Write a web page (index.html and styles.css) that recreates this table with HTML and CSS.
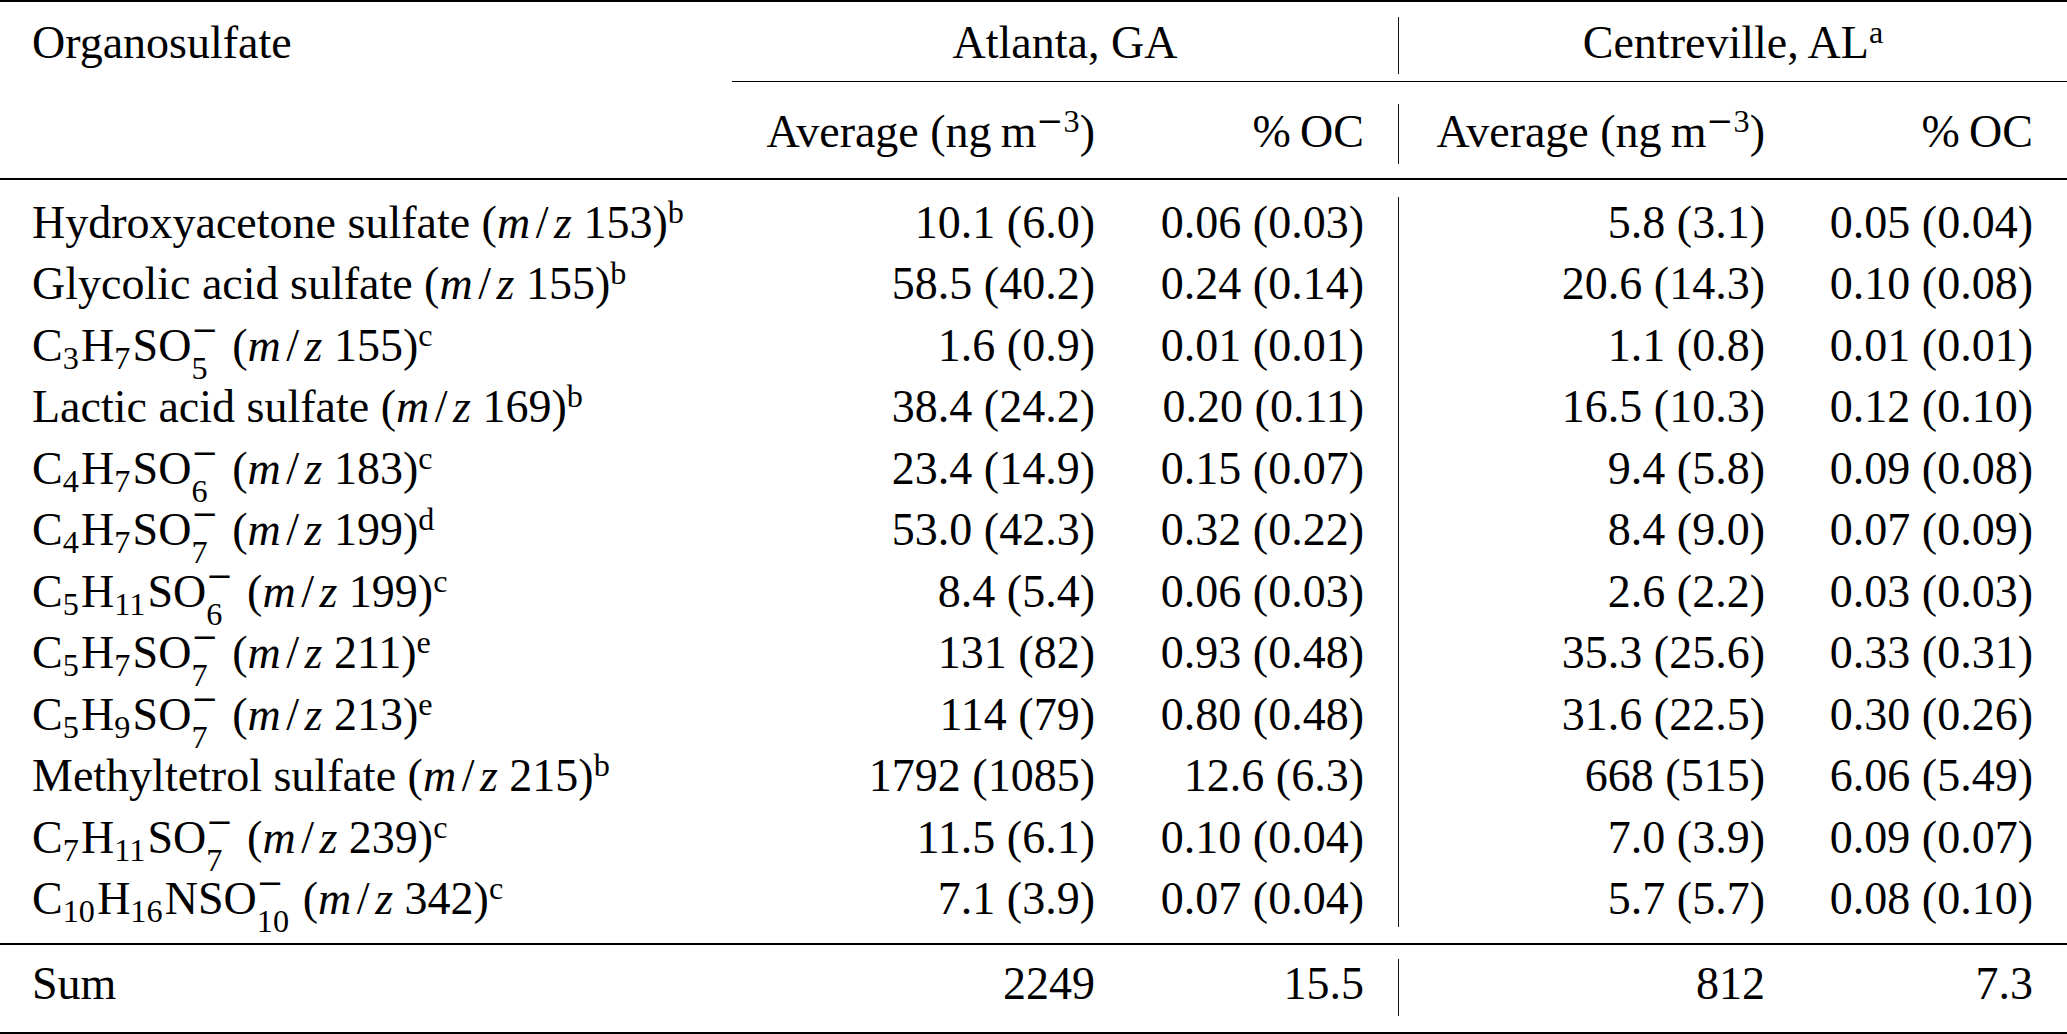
FILE: index.html
```html
<!DOCTYPE html>
<html lang="en">
<head>
<meta charset="utf-8">
<title>Organosulfate concentrations</title>
<link rel="stylesheet" href="styles.css">
</head>
<body>
<div class="tab">
  <div class="sec head1">
    <div class="c1">Organosulfate</div>
    <div class="grp">Atlanta, GA</div>
    <div class="vl"></div>
    <div class="grp">Centreville, AL<span class="sp">a</span></div>
  </div>
  <div class="cmid"></div>
  <div class="sec head2">
    <div class="c1"></div>
    <div class="num">Average (ng&thinsp;m<span class="sp"><span class="mn">−</span>3</span>)</div>
    <div class="num end">%&thinsp;OC</div>
    <div class="vl"></div>
    <div class="num">Average (ng&thinsp;m<span class="sp"><span class="mn">−</span>3</span>)</div>
    <div class="num end">%&thinsp;OC</div>
  </div>
  <div class="rule"></div>
  <div class="sec body">
    <div class="vl"></div>

    <div class="c1">Hydroxyacetone sulfate (<i>m</i><span class="sl">/</span><i>z</i> 153)<span class="sp">b</span></div>
    <div class="num">10.1 (6.0)</div>
    <div class="num end">0.06 (0.03)</div>
    <div class="num">5.8 (3.1)</div>
    <div class="num end">0.05 (0.04)</div>

    <div class="c1">Glycolic acid sulfate (<i>m</i><span class="sl">/</span><i>z</i> 155)<span class="sp">b</span></div>
    <div class="num">58.5 (40.2)</div>
    <div class="num end">0.24 (0.14)</div>
    <div class="num">20.6 (14.3)</div>
    <div class="num end">0.10 (0.08)</div>

    <div class="c1">C<span class="sb">3</span>H<span class="sb">7</span>SO<span class="ss"><span class="u">−</span><span class="d">5</span></span> (<i>m</i><span class="sl">/</span><i>z</i> 155)<span class="sp">c</span></div>
    <div class="num">1.6 (0.9)</div>
    <div class="num end">0.01 (0.01)</div>
    <div class="num">1.1 (0.8)</div>
    <div class="num end">0.01 (0.01)</div>

    <div class="c1">Lactic acid sulfate (<i>m</i><span class="sl">/</span><i>z</i> 169)<span class="sp">b</span></div>
    <div class="num">38.4 (24.2)</div>
    <div class="num end">0.20 (0.11)</div>
    <div class="num">16.5 (10.3)</div>
    <div class="num end">0.12 (0.10)</div>

    <div class="c1">C<span class="sb">4</span>H<span class="sb">7</span>SO<span class="ss"><span class="u">−</span><span class="d">6</span></span> (<i>m</i><span class="sl">/</span><i>z</i> 183)<span class="sp">c</span></div>
    <div class="num">23.4 (14.9)</div>
    <div class="num end">0.15 (0.07)</div>
    <div class="num">9.4 (5.8)</div>
    <div class="num end">0.09 (0.08)</div>

    <div class="c1">C<span class="sb">4</span>H<span class="sb">7</span>SO<span class="ss"><span class="u">−</span><span class="d">7</span></span> (<i>m</i><span class="sl">/</span><i>z</i> 199)<span class="sp">d</span></div>
    <div class="num">53.0 (42.3)</div>
    <div class="num end">0.32 (0.22)</div>
    <div class="num">8.4 (9.0)</div>
    <div class="num end">0.07 (0.09)</div>

    <div class="c1">C<span class="sb">5</span>H<span class="sb">11</span>SO<span class="ss"><span class="u">−</span><span class="d">6</span></span> (<i>m</i><span class="sl">/</span><i>z</i> 199)<span class="sp">c</span></div>
    <div class="num">8.4 (5.4)</div>
    <div class="num end">0.06 (0.03)</div>
    <div class="num">2.6 (2.2)</div>
    <div class="num end">0.03 (0.03)</div>

    <div class="c1">C<span class="sb">5</span>H<span class="sb">7</span>SO<span class="ss"><span class="u">−</span><span class="d">7</span></span> (<i>m</i><span class="sl">/</span><i>z</i> 211)<span class="sp">e</span></div>
    <div class="num">131 (82)</div>
    <div class="num end">0.93 (0.48)</div>
    <div class="num">35.3 (25.6)</div>
    <div class="num end">0.33 (0.31)</div>

    <div class="c1">C<span class="sb">5</span>H<span class="sb">9</span>SO<span class="ss"><span class="u">−</span><span class="d">7</span></span> (<i>m</i><span class="sl">/</span><i>z</i> 213)<span class="sp">e</span></div>
    <div class="num">114 (79)</div>
    <div class="num end">0.80 (0.48)</div>
    <div class="num">31.6 (22.5)</div>
    <div class="num end">0.30 (0.26)</div>

    <div class="c1">Methyltetrol sulfate (<i>m</i><span class="sl">/</span><i>z</i> 215)<span class="sp">b</span></div>
    <div class="num">1792 (1085)</div>
    <div class="num end">12.6 (6.3)</div>
    <div class="num">668 (515)</div>
    <div class="num end">6.06 (5.49)</div>

    <div class="c1">C<span class="sb">7</span>H<span class="sb">11</span>SO<span class="ss"><span class="u">−</span><span class="d">7</span></span> (<i>m</i><span class="sl">/</span><i>z</i> 239)<span class="sp">c</span></div>
    <div class="num">11.5 (6.1)</div>
    <div class="num end">0.10 (0.04)</div>
    <div class="num">7.0 (3.9)</div>
    <div class="num end">0.09 (0.07)</div>

    <div class="c1">C<span class="sb">10</span>H<span class="sb">16</span>NSO<span class="ss"><span class="u">−</span><span class="d">10</span></span> (<i>m</i><span class="sl">/</span><i>z</i> 342)<span class="sp">c</span></div>
    <div class="num">7.1 (3.9)</div>
    <div class="num end">0.07 (0.04)</div>
    <div class="num">5.7 (5.7)</div>
    <div class="num end">0.08 (0.10)</div>
  </div>
  <div class="rule"></div>
  <div class="sec sum">
    <div class="c1">Sum</div>
    <div class="num">2249</div>
    <div class="num end">15.5</div>
    <div class="vl"></div>
    <div class="num">812</div>
    <div class="num end">7.3</div>
  </div>
</div>
</body>
</html>
```

FILE: styles.css
```css
* { box-sizing: border-box; }

html, body {
  margin: 0;
  padding: 0;
  background: #fff;
}

body {
  font-family: "Liberation Serif", "Times New Roman", Times, serif;
  font-size: 46px;
  color: #000;
}

.tab {
  width: 2067px;
  border-top: 2px solid #000;
  border-bottom: 2px solid #000;
}

.sec {
  display: grid;
  grid-template-columns: 732px 363px 303px 1px 366px 302px;
  white-space: nowrap;
}

.c1 { padding-left: 32px; }
.num { text-align: right; }
.end { padding-right: 34px; }
.grp { grid-column: span 2; text-align: center; }

.vl {
  grid-column: 4;
  grid-row: 1 / -1;
  background: #111;
}

.head1 {
  grid-template-rows: 79px;
  line-height: 77px;
}
.head1 > div:not(.vl) { padding-top: 2px; }
.head1 .vl { margin: 15px 0 7px; }

.cmid {
  margin-left: 732px;
  height: 1px;
  background: #000;
}

.head2 {
  grid-template-rows: 96px;
  line-height: 90px;
}
.head2 > div:not(.vl) { padding-top: 5px; }
.head2 .vl { margin: 22px 0 14px; }

.rule {
  height: 2px;
  background: #000;
}

.body {
  grid-template-rows: repeat(12, 61.5px);
  padding: 11.7px 0 13.3px;
  line-height: 61.5px;
}
.body .vl { margin: 5.3px 0 2.7px; }

.sum {
  grid-template-rows: 87px;
  line-height: 61px;
}
.sum > div:not(.vl) { padding-top: 8px; }
.sum .vl { margin: 14px 0 16px; }

.sl { margin: 0 0.12em; }

.mn {
  font-family: "DejaVu Serif", "Liberation Serif", serif;
  font-weight: normal;
}

.sp {
  font-size: 0.7em;
  vertical-align: 15px;
  line-height: 0;
}

.sb {
  font-size: 0.7em;
  vertical-align: -8px;
  line-height: 0;
  margin-right: 0.07em;
}

.ss {
  display: inline-block;
  font-size: 0.7em;
  vertical-align: -18px;
  text-align: left;
  margin-right: 0.07em;
}
.ss > span { display: block; }
.ss .u {
  line-height: 20px;
  font-family: "DejaVu Serif", "Liberation Serif", serif;
}
.ss .d { line-height: 56px; }
```
